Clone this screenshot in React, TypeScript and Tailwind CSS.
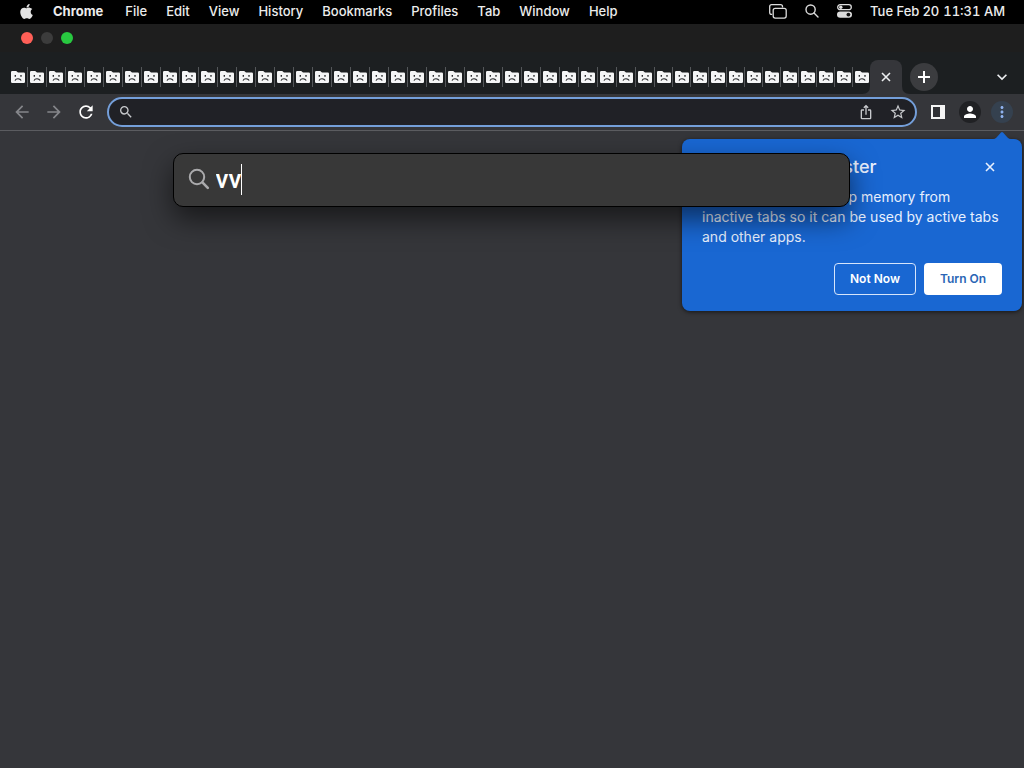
import React from "react";
import { FaApple } from "react-icons/fa";
import {
  MdArrowBack,
  MdArrowForward,
  MdRefresh,
  MdSearch,
  MdPerson,
  MdMoreVert,
  MdStarBorder,
  MdKeyboardArrowDown,
  MdOutlineIosShare,
} from "react-icons/md";

const menus = ["File", "Edit", "View", "History", "Bookmarks", "Profiles", "Tab", "Window", "Help"];
const wideTabs = 34;
const tabCount = 46;

function tabWidth(i: number) {
  if (i < wideTabs) return "w-[19px]";
  return i < tabCount - 1 ? "w-[18px]" : "w-[17px]";
}

function SadTabIcon() {
  return (
    <svg viewBox="0 0 14 12" className="h-3 w-3.5 shrink-0" aria-hidden="true">
      <path d="M0 1.2Q0 0 1.2 0H5.2L7 1.5H12.8Q14 1.5 14 2.7V10.8Q14 12 12.8 12H1.2Q0 12 0 10.8Z" fill="#f4f5f6" />
      <path d="M4.3 4v1.7M10 4v1.7" stroke="#202124" strokeWidth="1.3" />
      <path d="M4 9.6Q4.8 7.8 7 7.8T10.2 9.6" stroke="#202124" strokeWidth="1.1" fill="none" />
    </svg>
  );
}

function CrossIcon() {
  return (
    <svg viewBox="0 0 14 14" className="h-3.5 w-3.5" fill="none" stroke="currentColor" strokeWidth="1.6" aria-hidden="true">
      <path d="M3 3l8 8M11 3l-8 8" />
    </svg>
  );
}

function MenuBar() {
  return (
    <header className="flex h-6 items-center justify-between bg-black pr-[19px] pb-0.5 pl-[18px] text-[13px] leading-5 font-medium text-[#ececec]">
      <nav className="flex items-center gap-[19px]">
        <button aria-label="Apple menu" className="w-4 text-[#e4e4e4]">
          <FaApple size={17} />
        </button>
        <button className="pr-[3px] font-bold">Chrome</button>
        {menus.map((m) => (
          <button key={m}>{m}</button>
        ))}
      </nav>
      <div className="flex items-center">
        <svg viewBox="0 0 18 15" className="mr-[18px] h-[15px] w-[18px]" fill="none" stroke="#dcdcdc" strokeWidth="1.3" aria-hidden="true">
          <path d="M3.2 10.4H2.6Q.7 10.4.7 8.5V2.6Q.7.7 2.6.7H11.6Q13.5.7 13.5 2.6V3.4" />
          <rect x="4.2" y="4.3" width="13" height="9.8" rx="2" />
        </svg>
        <svg viewBox="0 0 14 14" className="mr-[18px] h-3.5 w-3.5" fill="none" stroke="#dcdcdc" strokeWidth="1.4" strokeLinecap="round" aria-hidden="true">
          <circle cx="5.6" cy="5.6" r="4.6" />
          <path d="M9 9l4 4" />
        </svg>
        <svg viewBox="0 0 15 14" className="mr-[18px] h-3.5 w-[15px]" aria-hidden="true">
          <rect x=".7" y=".7" width="13.6" height="5" rx="2.5" fill="none" stroke="#dcdcdc" strokeWidth="1.3" />
          <circle cx="3.8" cy="3.2" r="1.7" fill="#dcdcdc" />
          <rect x="0" y="7.4" width="15" height="6.4" rx="3.2" fill="#dcdcdc" />
          <circle cx="11.4" cy="10.6" r="1.9" fill="#111" />
        </svg>
        <span className="mr-1">Tue Feb 20</span>
        <span className="tabular-nums">11:31 AM</span>
      </div>
    </header>
  );
}

function TabStrip() {
  return (
    <div className="flex h-[42px] items-end bg-[#1c1f21] pl-[9px]">
      <div className="flex h-[34px]">
        {Array.from({ length: tabCount }, (_, i) => (
          <button key={i} aria-label={`Tab ${i + 1}`} className={`flex items-center pl-0.5 ${tabWidth(i)}`}>
            <SadTabIcon />
            <span className={`ml-auto h-5 w-px ${i === tabCount - 1 ? "" : "bg-[#54575a]"}`} />
          </button>
        ))}
      </div>
      <div className="relative flex h-[34px] w-8 shrink-0 items-center justify-center rounded-t-lg bg-[#35363a]">
        <button aria-label="Close tab" className="text-[#eceef0]">
          <CrossIcon />
        </button>
        <svg viewBox="0 0 8 8" className="absolute bottom-0 -left-2 h-2 w-2" fill="#35363a" aria-hidden="true">
          <path d="M8 0V8H0Q8 8 8 0Z" />
        </svg>
        <svg viewBox="0 0 8 8" className="absolute -right-2 bottom-0 h-2 w-2" fill="#35363a" aria-hidden="true">
          <path d="M0 0V8H8Q0 8 0 0Z" />
        </svg>
      </div>
      <button aria-label="New tab" className="mb-[3px] ml-2 flex h-7 w-7 shrink-0 items-center justify-center rounded-full bg-[#3b3c3f] text-white">
        <svg viewBox="0 0 12 12" className="h-3 w-3" fill="none" stroke="currentColor" strokeWidth="2" aria-hidden="true">
          <path d="M6 0v12M0 6h12" />
        </svg>
      </button>
      <button aria-label="Search tabs" className="mr-3 mb-[7px] ml-auto text-[#eceef0]">
        <MdKeyboardArrowDown size={20} />
      </button>
    </div>
  );
}

function Toolbar() {
  return (
    <div className="flex h-[37px] items-center border-b border-[#5b5c60] bg-[#35363a] pr-[11px] pl-3">
      <div className="flex gap-3 text-[#85868a]">
        <button aria-label="Back"><MdArrowBack size={20} /></button>
        <button aria-label="Forward"><MdArrowForward size={20} /></button>
        <button aria-label="Reload" className="text-white"><MdRefresh size={20} /></button>
      </div>
      <div className="ml-[11px] flex h-[30px] flex-1 items-center rounded-full border-2 border-[#749fda] bg-[#202126] pr-2 pl-[9px] text-[#c8cacd]">
        <MdSearch size={16} />
        <input aria-label="Address and search bar" className="h-6 min-w-0 flex-1 bg-transparent px-2 text-sm text-white outline-none" />
        <button aria-label="Share" className="mr-[15px]"><MdOutlineIosShare size={16} /></button>
        <button aria-label="Bookmark this tab"><MdStarBorder size={18} /></button>
      </div>
      <button aria-label="Side panel" className="ml-3.5">
        <svg viewBox="0 0 14 14" className="h-3.5 w-3.5" aria-hidden="true">
          <rect width="14" height="14" fill="#f5f5f5" />
          <rect x="2" y="2" width="7" height="10" fill="#303135" />
        </svg>
      </button>
      <button aria-label="Profile" className="ml-3.5 flex h-[22px] w-[22px] items-center justify-center rounded-full bg-[#202124] text-white">
        <MdPerson size={18} />
      </button>
      <button aria-label="Chrome menu" className="ml-2.5 flex h-[22px] w-[22px] items-center justify-center rounded-full bg-[#35414f] text-[#8fb2ee]">
        <MdMoreVert size={18} />
      </button>
    </div>
  );
}

function MemorySaver() {
  return (
    <section className="absolute top-2 right-0.5 w-[340px] rounded-lg bg-[#1967d2] p-5 pt-4 pb-4 text-[#e8f0fe] shadow-[0_1px_4px_rgba(0,0,0,0.6)]">
      <svg viewBox="0 0 18 8" className="absolute -top-2 right-[11px] h-2 w-[18px]" fill="#1967d2" aria-hidden="true">
        <path d="M0 8Q2 8 3.5 6.5L8 1.5Q9 .5 10 1.5L14.5 6.5Q16 8 18 8Z" />
      </svg>
      <div className="flex items-center justify-between">
        <h2 className="text-lg leading-6 font-medium">Make Chrome faster</h2>
        <button aria-label="Close" className="mr-[5px]"><CrossIcon /></button>
      </div>
      <p className="mt-2 text-sm leading-5">
        Memory Saver frees up memory from inactive tabs so it can be used by active tabs and other apps.
      </p>
      <div className="mt-4 flex justify-end gap-2 text-xs font-semibold">
        <button className="h-8 w-[82px] rounded border border-[#d6e5fb] text-white">Not Now</button>
        <button className="h-8 w-[78px] rounded bg-white text-[#2a65b5]">Turn On</button>
      </div>
    </section>
  );
}

function Spotlight() {
  return (
    <div className="absolute inset-x-0 top-[22px] flex justify-center pr-0.5">
      <label className="flex h-[54px] w-[677px] items-center rounded-[10px] border border-black bg-[#383838] pb-0.5 pl-3.5 shadow-[0_12px_28px_rgba(0,0,0,0.55)]">
        <svg viewBox="0 0 22 22" className="h-[22px] w-[22px]" fill="none" stroke="#aaaaac" strokeWidth="2" strokeLinecap="round" aria-hidden="true">
          <circle cx="9" cy="9" r="7.2" />
          <path d="M14.4 14.4l5.4 5.4" strokeWidth="2.6" />
        </svg>
        <span className="relative ml-1.5 flex flex-1 items-center">
          <input
            aria-label="Spotlight Search"
            defaultValue="vv"
            className="h-9 w-full bg-transparent font-['Roboto','Liberation_Sans',sans-serif] text-[26px] font-medium text-white outline-none"
          />
          <span className="absolute left-[25px] h-[31px] w-px bg-white" />
        </span>
      </label>
    </div>
  );
}

export default function App() {
  return (
    <div className="flex min-h-screen flex-col bg-[#35363a] font-['Inter','Liberation_Sans',sans-serif]">
      <MenuBar />
      <div className="flex h-7 items-center gap-2 bg-[#1e1e1e] pl-[21px]">
        <button aria-label="Close window" className="h-3 w-3 rounded-full bg-[#ff5f57]" />
        <button aria-label="Minimize window" className="h-3 w-3 rounded-full bg-[#3c3c3c]" />
        <button aria-label="Zoom window" className="h-3 w-3 rounded-full bg-[#28c840]" />
      </div>
      <TabStrip />
      <Toolbar />
      <main className="relative flex-1">
        <MemorySaver />
        <Spotlight />
      </main>
    </div>
  );
}
